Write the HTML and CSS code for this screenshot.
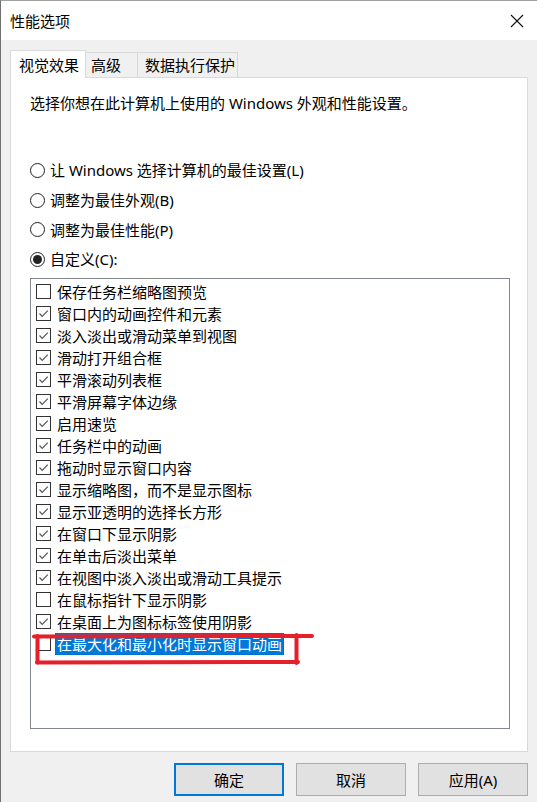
FILE: index.html
```html
<!DOCTYPE html>
<html lang="zh-CN">
<head>
<meta charset="utf-8">
<title>性能选项</title>
<link rel="stylesheet" href="styles.css">
</head>
<body>
<div class="window">
  <div class="titlebar">
    <span class="title">性能选项</span>
    <svg class="close" width="14" height="14" viewBox="0 0 14 14"><path d="M1 1 L13 13 M13 1 L1 13" stroke="#111" stroke-width="1.1" fill="none"/></svg>
  </div>
  <div class="content">
    <div class="tabs">
      <div class="tab active">视觉效果</div>
      <div class="tab tab-adv">高级</div>
      <div class="tab tab-dep">数据执行保护</div>
    </div>
    <div class="panel">
      <p class="desc">选择你想在此计算机上使用的 Windows 外观和性能设置。</p>
      <div class="radios">
        <div class="radio-row"><span class="radio"></span><span>让 Windows 选择计算机的最佳设置(L)</span></div>
        <div class="radio-row"><span class="radio"></span><span>调整为最佳外观(B)</span></div>
        <div class="radio-row"><span class="radio"></span><span>调整为最佳性能(P)</span></div>
        <div class="radio-row"><span class="radio selected"></span><span>自定义(C):</span></div>
      </div>
      <div class="list">
        <div class="item"><span class="cb"></span><span class="label">保存任务栏缩略图预览</span></div>
        <div class="item"><span class="cb checked"><svg viewBox="0 0 13 13"><path d="M2.5 6.5 L5.2 9.3 L10.8 3.6" /></svg></span><span class="label">窗口内的动画控件和元素</span></div>
        <div class="item"><span class="cb checked"><svg viewBox="0 0 13 13"><path d="M2.5 6.5 L5.2 9.3 L10.8 3.6" /></svg></span><span class="label">淡入淡出或滑动菜单到视图</span></div>
        <div class="item"><span class="cb checked"><svg viewBox="0 0 13 13"><path d="M2.5 6.5 L5.2 9.3 L10.8 3.6" /></svg></span><span class="label">滑动打开组合框</span></div>
        <div class="item"><span class="cb checked"><svg viewBox="0 0 13 13"><path d="M2.5 6.5 L5.2 9.3 L10.8 3.6" /></svg></span><span class="label">平滑滚动列表框</span></div>
        <div class="item"><span class="cb checked"><svg viewBox="0 0 13 13"><path d="M2.5 6.5 L5.2 9.3 L10.8 3.6" /></svg></span><span class="label">平滑屏幕字体边缘</span></div>
        <div class="item"><span class="cb checked"><svg viewBox="0 0 13 13"><path d="M2.5 6.5 L5.2 9.3 L10.8 3.6" /></svg></span><span class="label">启用速览</span></div>
        <div class="item"><span class="cb checked"><svg viewBox="0 0 13 13"><path d="M2.5 6.5 L5.2 9.3 L10.8 3.6" /></svg></span><span class="label">任务栏中的动画</span></div>
        <div class="item"><span class="cb checked"><svg viewBox="0 0 13 13"><path d="M2.5 6.5 L5.2 9.3 L10.8 3.6" /></svg></span><span class="label">拖动时显示窗口内容</span></div>
        <div class="item"><span class="cb checked"><svg viewBox="0 0 13 13"><path d="M2.5 6.5 L5.2 9.3 L10.8 3.6" /></svg></span><span class="label">显示缩略图，而不是显示图标</span></div>
        <div class="item"><span class="cb checked"><svg viewBox="0 0 13 13"><path d="M2.5 6.5 L5.2 9.3 L10.8 3.6" /></svg></span><span class="label">显示亚透明的选择长方形</span></div>
        <div class="item"><span class="cb checked"><svg viewBox="0 0 13 13"><path d="M2.5 6.5 L5.2 9.3 L10.8 3.6" /></svg></span><span class="label">在窗口下显示阴影</span></div>
        <div class="item"><span class="cb checked"><svg viewBox="0 0 13 13"><path d="M2.5 6.5 L5.2 9.3 L10.8 3.6" /></svg></span><span class="label">在单击后淡出菜单</span></div>
        <div class="item"><span class="cb checked"><svg viewBox="0 0 13 13"><path d="M2.5 6.5 L5.2 9.3 L10.8 3.6" /></svg></span><span class="label">在视图中淡入淡出或滑动工具提示</span></div>
        <div class="item"><span class="cb"></span><span class="label">在鼠标指针下显示阴影</span></div>
        <div class="item"><span class="cb checked"><svg viewBox="0 0 13 13"><path d="M2.5 6.5 L5.2 9.3 L10.8 3.6" /></svg></span><span class="label">在桌面上为图标标签使用阴影</span></div>
        <div class="item"><span class="cb"></span><span class="label selected">在最大化和最小化时显示窗口动画</span></div>
      </div>
    </div>
    <div class="buttons">
      <button class="btn default">确定</button>
      <button class="btn">取消</button>
      <button class="btn">应用(A)</button>
    </div>
  </div>
  <svg class="annotation" width="537" height="802" viewBox="0 0 537 802">
    <path d="M34 636.5 L312 636" />
    <path d="M37.5 636 L37.5 662.5" />
    <path d="M37 662.5 L298 662" />
    <path d="M296.5 635 L296.5 663" />
  </svg>
</div>
</body>
</html>
```

FILE: styles.css
```css
html, body {
  margin: 0;
  padding: 0;
}
body {
  width: 537px;
  height: 802px;
  overflow: hidden;
  background: #f0f0f0;
  font-family: "Noto Sans", "Noto Sans CJK SC", sans-serif;
  font-size: 15px;
  color: #000;
}
.window {
  position: relative;
  width: 537px;
  height: 802px;
  box-sizing: border-box;
  border-left: 1px solid #707070;
  border-top: 1px solid #a0a0a0;
  background: #f0f0f0;
}
.titlebar {
  height: 39px;
  background: #fff;
  display: flex;
  align-items: center;
  justify-content: space-between;
  padding: 0 13px 0 9px;
}
.title {
  font-size: 15px;
  line-height: 20px;
  margin-top: 1px;
}
.close {
  display: block;
  margin-top: 1px;
}
.content {
  padding: 10px 9px 0 9px;
}
.tabs {
  display: flex;
  align-items: flex-end;
  height: 27px;
  position: relative;
  z-index: 1;
}
.tab {
  height: 25px;
  line-height: 24px;
  border: 1px solid #d9d9d9;
  border-bottom: none;
  margin-left: -1px;
  background: #f0f0f0;
  box-sizing: border-box;
  white-space: nowrap;
}
.tab-adv {
  width: 53px;
  padding-left: 5px;
}
.tab-dep {
  width: 101px;
  padding-left: 7px;
}
.tab.active {
  width: 76px;
  height: 28px;
  margin-bottom: -1px;
  margin-left: 0;
  background: #fff;
  line-height: 28px;
  padding-left: 8px;
  position: relative;
  z-index: 2;
}
.panel {
  height: 675px;
  box-sizing: border-box;
  border: 1px solid #d9d9d9;
  background: #fff;
  padding: 14px 17px 0 19px;
}
.desc {
  margin: 0;
  line-height: 22px;
}
.radios {
  margin-top: 41px;
  display: flex;
  flex-direction: column;
}
.radio-row {
  display: flex;
  align-items: center;
  height: 29.7px;
  gap: 5px;
}
.radio {
  flex: 0 0 auto;
  width: 15px;
  height: 15px;
  box-sizing: border-box;
  border: 1px solid #222;
  border-radius: 50%;
  background: #fff;
  display: flex;
  align-items: center;
  justify-content: center;
  margin-top: 1px;
}
.radio.selected::after {
  content: "";
  width: 9px;
  height: 9px;
  border-radius: 50%;
  background: #222;
}
.list {
  margin-top: 4px;
  height: 451px;
  box-sizing: border-box;
  border: 1px solid #828790;
  background: #fff;
  padding: 2px 5px 0 5px;
}
.item {
  display: flex;
  align-items: center;
  height: 22px;
}
.cb {
  flex: 0 0 auto;
  width: 15px;
  height: 15px;
  box-sizing: border-box;
  border: 1px solid #333;
  background: #fff;
  margin-right: 4px;
  display: flex;
  align-items: center;
  justify-content: center;
}
.cb svg {
  width: 13px;
  height: 13px;
  display: block;
}
.cb svg path {
  fill: none;
  stroke: #555;
  stroke-width: 1.2;
}
.label {
  line-height: 20px;
  padding: 0 1px;
  border: 1px dotted transparent;
}
.label.selected {
  background: #0078d7;
  color: #fff;
  border: 1px dotted #7a4a1a;
}
.buttons {
  display: flex;
  justify-content: flex-end;
  gap: 12px;
  margin-top: 11px;
}
.btn {
  width: 110px;
  height: 33px;
  box-sizing: border-box;
  border: 1px solid #adadad;
  background: #e1e1e1;
  font-family: "Noto Sans", "Noto Sans CJK SC", sans-serif;
  font-size: 15px;
  color: #000;
  padding: 0;
}
.btn.default {
  border: 2px solid #0078d7;
}
.annotation {
  position: absolute;
  left: -1px;
  top: -1px;
  pointer-events: none;
}
.annotation path {
  fill: none;
  stroke: #e5202a;
  stroke-width: 4;
  stroke-linecap: round;
}
```
